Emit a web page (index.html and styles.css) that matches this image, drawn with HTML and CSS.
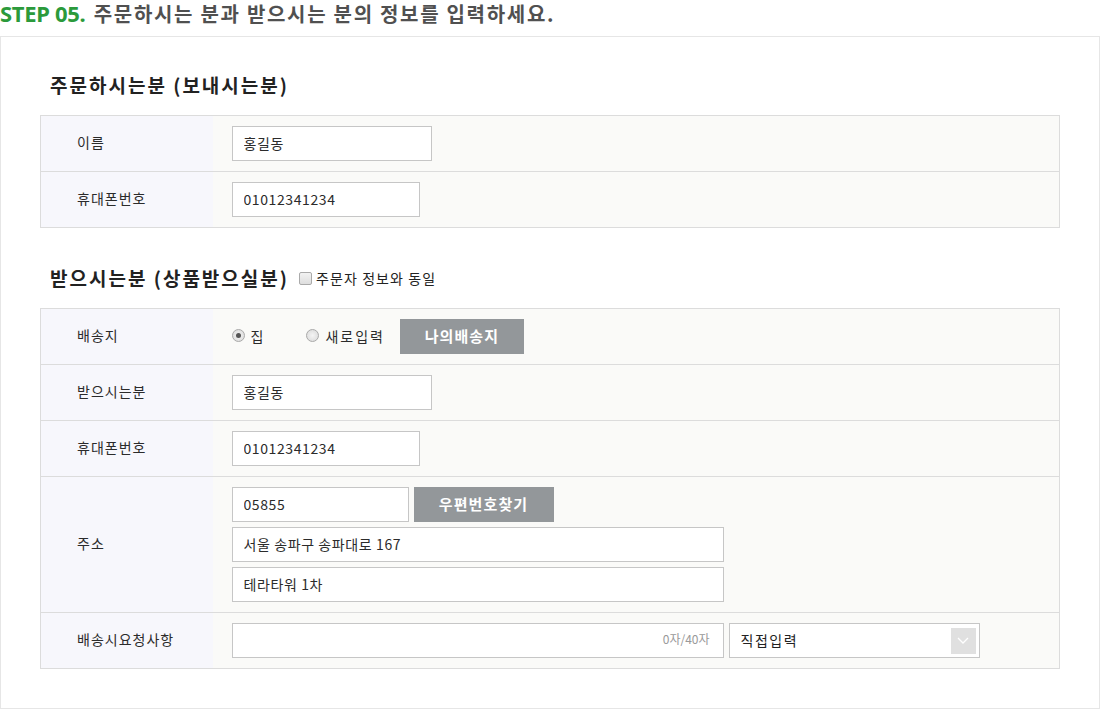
FILE: index.html
```html
<!DOCTYPE HTML>
<html>
<head>
<meta charset="utf-8">
<title>주문서 작성</title>
<link rel="stylesheet" href="styles.css">
</head>
<body>

<h2 class="step-title"><span class="step-num">STEP 05.</span> 주문하시는 분과 받으시는 분의 정보를 입력하세요.</h2>

<div class="order-box">

  <h3 class="sec-title">주문하시는분 (보내시는분)</h3>
  <table class="form-table">
    <tr>
      <th>이름</th>
      <td><input type="text" class="inp w200" value="홍길동"></td>
    </tr>
    <tr>
      <th>휴대폰번호</th>
      <td><input type="text" class="inp w188" value="01012341234"></td>
    </tr>
  </table>

  <h3 class="sec-title">받으시는분 (상품받으실분)
    <label class="same-check"><span class="chk"></span>주문자 정보와 동일</label>
  </h3>
  <table class="form-table">
    <tr>
      <th>배송지</th>
      <td>
        <div class="radio-line">
          <label class="radio on"><span class="dot"></span>집</label>
          <label class="radio"><span class="dot"></span>새로입력</label>
          <button type="button" class="btn-gray w124">나의배송지</button>
        </div>
      </td>
    </tr>
    <tr>
      <th>받으시는분</th>
      <td><input type="text" class="inp w200" value="홍길동"></td>
    </tr>
    <tr>
      <th>휴대폰번호</th>
      <td><input type="text" class="inp w188" value="01012341234"></td>
    </tr>
    <tr>
      <th>주소</th>
      <td>
        <div class="addr">
          <div class="addr-line">
            <input type="text" class="inp w177" value="05855">
            <button type="button" class="btn-gray w140">우편번호찾기</button>
          </div>
          <input type="text" class="inp w492" value="서울 송파구 송파대로 167">
          <input type="text" class="inp w492" value="테라타워 1차">
        </div>
      </td>
    </tr>
    <tr>
      <th>배송시요청사항</th>
      <td>
        <div class="memo-line">
          <div class="memo">
            <input type="text" class="memo-inp">
            <span class="count">0자/40자</span>
          </div>
          <div class="select">
            <span>직접입력</span>
            <span class="arrow">
              <svg width="12" height="7" viewBox="0 0 12 7"><path d="M1 1l5 5 5-5" fill="none" stroke="#fff" stroke-width="1.3"/></svg>
            </span>
          </div>
        </div>
      </td>
    </tr>
  </table>

</div>

</body>
</html>
```

FILE: styles.css
```css
* {
  box-sizing: border-box;
}

body {
  margin: 0;
  font-family: "Noto Sans CJK KR", "Noto Sans", sans-serif;
  color: #333;
  background: #fff;
}

/* 상단 타이틀 */

.step-title {
  margin: 0;
  height: 36px;
  padding-top: 0;
  font-size: 20px;
  line-height: 26px;
  font-weight: bold;
  color: #505050;
  letter-spacing: 1.7px;
  white-space: nowrap;
}

.step-num {
  font-family: "Noto Sans", sans-serif;
  font-size: 22px;
  color: #2b9a3b;
  font-weight: bold;
  letter-spacing: -0.3px;
  margin-right: 2px;
}

.order-box {
  border: 1px solid #e6e6e6;
  padding: 34px 39px 38px 39px;
  height: 673px;
}

.sec-title {
  margin: 0 0 16px 10px;
  font-size: 19px;
  line-height: 28px;
  font-weight: bold;
  color: #222;
  letter-spacing: 2px;
  display: flex;
  align-items: center;
}

.sec-title + .form-table + .sec-title {
  margin-top: 36px;
}

.same-check {
  display: flex;
  align-items: center;
  margin-left: 10px;
  font-size: 14px;
  font-weight: normal;
  color: #222;
  letter-spacing: 1.1px;
}

.chk {
  width: 13px;
  height: 13px;
  border: 1px solid #aaa;
  border-radius: 2px;
  background: linear-gradient(#f2f2f2, #dedede);
  margin-right: 4px;
}

/* 테이블 */

.form-table {
  width: 100%;
  border-collapse: collapse;
  border: 1px solid #dcdcdc;
}

.form-table th,
.form-table td {
  border-top: 1px solid #dcdcdc;
  height: 56px;
  font-size: 14px;
  vertical-align: middle;
}

.form-table th {
  width: 172px;
  background: #f7f7fc;
  text-align: left;
  font-weight: normal;
  color: #2b2b2b;
  padding: 0 0 3px 36px;
  letter-spacing: 1px;
}

.form-table td {
  background: #fafaf8;
  padding: 10px 19px;
}

.inp {
  display: block;
  height: 35px;
  border: 1px solid #c6c6c6;
  background: #fff;
  padding: 0 11px 1px;
  font-family: inherit;
  font-size: 14px;
  letter-spacing: 0.6px;
  color: #2b2b2b;
  outline: none;
}

.w200 { width: 200px; }
.w188 { width: 188px; }
.w177 { width: 177px; }
.w492 { width: 492px; }
.w124 { width: 124px; }
.w140 { width: 140px; }

.btn-gray {
  height: 35px;
  border: 0;
  background: #93979a;
  color: #fff;
  font-family: inherit;
  font-size: 15px;
  font-weight: bold;
  letter-spacing: 1.1px;
  padding: 0;
  padding-bottom: 3px;
}

/* 배송지 라디오 */

.radio-line {
  display: flex;
  align-items: center;
}

.radio {
  display: flex;
  align-items: center;
  font-size: 14px;
  color: #2b2b2b;
  letter-spacing: 2px;
  margin-right: 15px;
  padding-bottom: 2px;
}

.radio.on {
  margin-right: 41px;
}

.dot {
  width: 13px;
  height: 13px;
  border: 1px solid #aaa;
  border-radius: 50%;
  background: radial-gradient(#f4f4f4, #d8d8d8);
  margin-right: 6px;
  position: relative;
}

.radio.on .dot::after {
  content: "";
  position: absolute;
  left: 3px;
  top: 3px;
  width: 5px;
  height: 5px;
  border-radius: 50%;
  background: #555;
}

/* 주소 */

.addr {
  display: flex;
  flex-direction: column;
  gap: 5px;
}

.addr-line {
  display: flex;
  gap: 5px;
}

/* 요청사항 */

.memo-line {
  display: flex;
  gap: 5px;
}

.memo {
  position: relative;
  width: 492px;
}

.memo-inp {
  display: block;
  width: 100%;
  height: 35px;
  border: 1px solid #c6c6c6;
  background: #fff;
  outline: none;
}

.count {
  position: absolute;
  right: 14px;
  top: 7px;
  font-size: 12px;
  color: #999;
}

.select {
  width: 251px;
  height: 35px;
  border: 1px solid #c6c6c6;
  background: #fff;
  display: flex;
  align-items: center;
  justify-content: space-between;
  padding: 0 3px 0 11px;
  font-size: 14px;
  letter-spacing: 1.5px;
  color: #222;
}

.select span:first-child {
  padding-bottom: 2px;
}

.arrow {
  width: 25px;
  height: 26px;
  background: #e0e0e0;
  display: flex;
  align-items: center;
  justify-content: center;
}
```
